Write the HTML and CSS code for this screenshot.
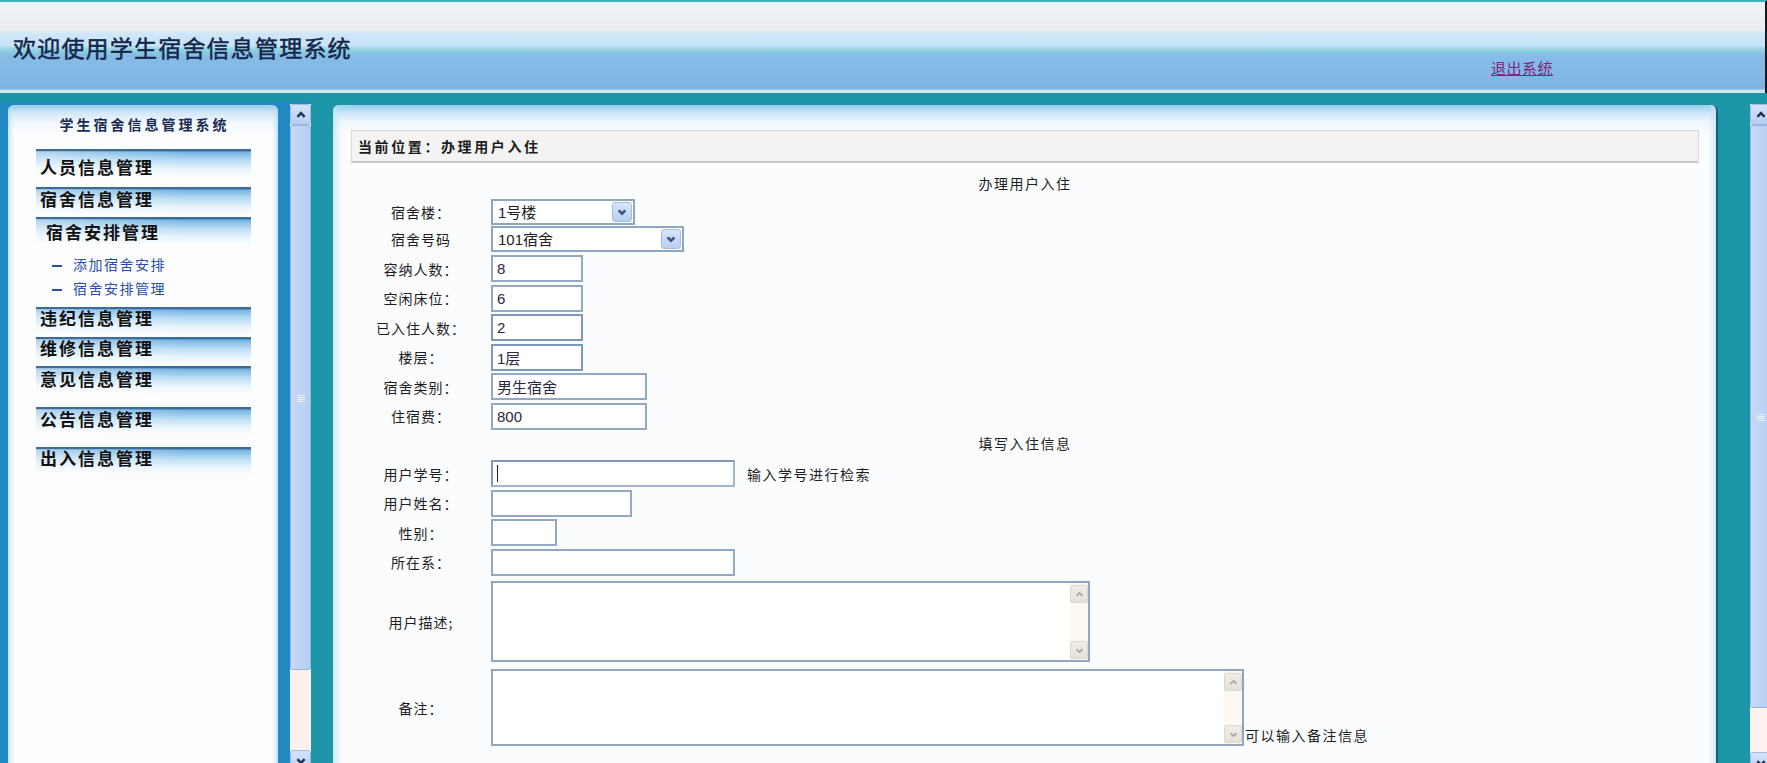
FILE: index.html
```html
<!DOCTYPE html>
<html lang="zh-CN">
<head>
<meta charset="utf-8">
<title>学生宿舍信息管理系统</title>
<link rel="stylesheet" href="styles.css">
</head>
<body>
<div class="page">
  <header class="topbar">
    <h1 class="site-title">欢迎使用学生宿舍信息管理系统</h1>
    <a class="logout" href="#">退出系统</a>
  </header>

  <div class="workspace">
    <div class="side-frame">
      <nav class="side-panel">
        <div class="side-title">学生宿舍信息管理系统</div>
        <div class="menu first">人员信息管理</div>
        <div class="menu">宿舍信息管理</div>
        <div class="menu open">宿舍安排管理</div>
        <ul class="submenu">
          <li><span class="dash"></span>添加宿舍安排</li>
          <li><span class="dash"></span>宿舍安排管理</li>
        </ul>
        <div class="menu tight">违纪信息管理</div>
        <div class="menu tight short">维修信息管理</div>
        <div class="menu tall">意见信息管理</div>
        <div class="menu tall2">公告信息管理</div>
        <div class="menu tight">出入信息管理</div>
      </nav>
      <div class="vscroll left-sb">
        <div class="sb-btn"><svg viewBox="0 0 10 10"><path d="M2 6.6 L5 3.4 L8 6.6" /></svg></div>
        <div class="sb-thumb thumb-left"><svg class="grip" viewBox="0 0 8 8"><path d="M0 1.5H8M0 3.5H8M0 5.5H8M0 7.5H8" /></svg></div>
        <div class="sb-track"></div>
        <div class="sb-btn"><svg viewBox="0 0 10 10"><path d="M2 3.4 L5 6.6 L8 3.4" /></svg></div>
      </div>
    </div>

    <main class="content-panel">
      <div class="crumb">当前位置：办理用户入住</div>
      <form class="checkin">
        <div class="form-title">办理用户入住</div>

        <div class="row r-a">
          <label class="lbl">宿舍楼：</label>
          <div class="sel sel-1">
            <select><option>1号楼</option></select>
            <span class="drop"><svg viewBox="0 0 10 10"><path d="M2.2 3.6 L5 6.4 L7.8 3.6" /></svg></span>
          </div>
        </div>
        <div class="row r-b">
          <label class="lbl">宿舍号码</label>
          <div class="sel sel-2">
            <select><option>101宿舍</option></select>
            <span class="drop"><svg viewBox="0 0 10 10"><path d="M2.2 3.6 L5 6.4 L7.8 3.6" /></svg></span>
          </div>
        </div>
        <div class="row r-c">
          <label class="lbl">容纳人数：</label>
          <input class="inp w-s" type="text" value="8">
        </div>
        <div class="row">
          <label class="lbl">空闲床位：</label>
          <input class="inp w-s" type="text" value="6">
        </div>
        <div class="row">
          <label class="lbl">已入住人数：</label>
          <input class="inp w-s dark" type="text" value="2">
        </div>
        <div class="row">
          <label class="lbl">楼层：</label>
          <input class="inp w-s dark" type="text" value="1层">
        </div>
        <div class="row">
          <label class="lbl">宿舍类别：</label>
          <input class="inp w-m" type="text" value="男生宿舍">
        </div>
        <div class="row">
          <label class="lbl">住宿费：</label>
          <input class="inp w-m" type="text" value="800">
        </div>

        <div class="form-title sub-title">填写入住信息</div>

        <div class="row r-d">
          <label class="lbl">用户学号：</label>
          <div class="inp w-l focus caret-box"><span class="caret"></span></div>
          <span class="hint">输入学号进行检索</span>
        </div>
        <div class="row">
          <label class="lbl">用户姓名：</label>
          <input class="inp w-n" type="text" value="">
        </div>
        <div class="row">
          <label class="lbl">性别：</label>
          <input class="inp w-xs" type="text" value="">
        </div>
        <div class="row">
          <label class="lbl">所在系：</label>
          <input class="inp w-l" type="text" value="">
        </div>
        <div class="row r-e">
          <label class="lbl">用户描述;</label>
          <div class="ta-wrap ta-1">
            <textarea></textarea>
            <div class="ta-scroll">
              <span class="ta-btn"><svg viewBox="0 0 10 10"><path d="M2.2 6.2 L5 3.6 L7.8 6.2" /></svg></span>
              <span class="ta-track"></span>
              <span class="ta-btn"><svg viewBox="0 0 10 10"><path d="M2.2 3.8 L5 6.4 L7.8 3.8" /></svg></span>
            </div>
          </div>
        </div>
        <div class="row r-f">
          <label class="lbl">备注：</label>
          <div class="ta-wrap ta-2">
            <textarea></textarea>
            <div class="ta-scroll">
              <span class="ta-btn"><svg viewBox="0 0 10 10"><path d="M2.2 6.2 L5 3.6 L7.8 6.2" /></svg></span>
              <span class="ta-track"></span>
              <span class="ta-btn"><svg viewBox="0 0 10 10"><path d="M2.2 3.8 L5 6.4 L7.8 3.8" /></svg></span>
            </div>
          </div>
          <span class="hint end">可以输入备注信息</span>
        </div>
      </form>
    </main>

    <div class="vscroll right-sb">
      <div class="sb-btn"><svg viewBox="0 0 10 10"><path d="M2 6.6 L5 3.4 L8 6.6" /></svg></div>
      <div class="sb-thumb thumb-right"><svg class="grip" viewBox="0 0 8 8"><path d="M0 1.5H8M0 3.5H8M0 5.5H8M0 7.5H8" /></svg></div>
      <div class="sb-track"></div>
      <div class="sb-btn"><svg viewBox="0 0 10 10"><path d="M2 3.4 L5 6.6 L8 3.4" /></svg></div>
    </div>
  </div>
</div>
</body>
</html>
```

FILE: styles.css
```css
html, body {
  margin: 0;
  padding: 0;
}

body {
  overflow: hidden;
  background: #1d95a9;
  font-family: "Noto Sans CJK SC", "Liberation Sans", sans-serif;
  color: #222;
}

.page {
  width: 1767px;
  height: 763px;
  overflow: hidden;
  background: #1d95a9;
}

/* ---------- header ---------- */
.topbar {
  box-sizing: border-box;
  height: 93px;
  display: flex;
  align-items: flex-start;
  border-top: 2px solid #3cb2c3;
  border-right: 2px solid #141a20;
  background: linear-gradient(to bottom,
    #f0f3f5 0px,
    #e8edf0 28px,
    #cfe6f7 32px,
    #c6e3f9 44px,
    #a2d6e8 46px,
    #8ecfde 49px,
    #86bde7 53px,
    #7db4e3 87px,
    #cde0eb 88px,
    #d7e7ef 91px);
}

.site-title {
  margin: 0;
  padding: 30px 0 0 13px;
  font-size: 23px;
  line-height: 30px;
  font-weight: normal;
  letter-spacing: 1.2px;
  color: #14264a;
  -webkit-text-stroke: 0.5px #14264a;
}

.logout {
  margin: 56px 212px 0 auto;
  font-size: 15px;
  line-height: 20px;
  letter-spacing: 0.5px;
  color: #85207f;
  text-decoration: underline;
}

/* ---------- workspace ---------- */
.workspace {
  display: flex;
  align-items: flex-start;
  height: 670px;
}

.side-frame {
  flex: none;
  width: 311px;
  height: 700px;
  margin-top: 9px;
  display: flex;
  align-items: flex-start;
  background: #2389c2;
}

.side-panel {
  box-sizing: border-box;
  flex: none;
  width: 270px;
  height: 700px;
  margin: 3px 12px 0 8px;
  padding-top: 9px;
  border-radius: 6px 6px 0 0;
  background: linear-gradient(to bottom, #93c4ec 0, #cfe6f8 7px, #f2f8fd 18px, #fcfdfe 30px);
  box-shadow: inset 4px 0 5px -2px #b3def3, inset -4px 0 5px -2px #b3def3;
}

.side-title {
  text-align: center;
  font-size: 14px;
  line-height: 20px;
  font-weight: bold;
  letter-spacing: 3px;
  color: #1b2b52;
  margin-bottom: 15px;
  padding-left: 3px;
}

.menu {
  box-sizing: border-box;
  width: 215px;
  height: 30px;
  margin-left: 28px;
  padding-left: 4px;
  font-size: 17px;
  line-height: 24px;
  font-weight: bold;
  letter-spacing: 2px;
  color: #111;
  background:
    linear-gradient(to right, rgba(255,255,255,0.45) 0%, rgba(255,255,255,0) 70%) no-repeat 0 2px / 100% 28px,
    linear-gradient(to bottom, #3d6c9a 0, #3d6c9a 2px, #74b4e4 3px, #b6daf3 11px, #e8f4fc 20px, rgba(255,255,255,0) 28px) no-repeat 0 0 / 100% 28px;
}

.menu.first { height: 38px; padding-top: 6px; }
.menu.open { height: 35px; padding-top: 3px; padding-left: 10px; }
.menu.tight { line-height: 22px; }
.menu.short { height: 29px; }
.menu.tall { height: 41px; line-height: 26px; }
.menu.tall2 { height: 40px; }

.submenu {
  list-style: none;
  margin: 0 0 7px 0;
  padding: 0 0 0 44px;
}

.submenu li {
  height: 24px;
  line-height: 24px;
  font-size: 14px;
  letter-spacing: 1.5px;
  color: #2b4ea6;
}

.dash {
  display: inline-block;
  width: 10px;
  height: 2px;
  margin-right: 11px;
  vertical-align: middle;
  background: #2b4ea6;
}

/* ---------- scrollbars ---------- */
.vscroll {
  flex: none;
  width: 21px;
  display: flex;
  flex-direction: column;
  background: #fbf0ea;
}

.left-sb { height: 680px; margin-top: 2px; }
.right-sb { height: 680px; margin: 11px 0 0 32px; }

.sb-btn {
  box-sizing: border-box;
  flex: none;
  height: 21px;
  display: flex;
  align-items: center;
  justify-content: center;
  border: 1px solid #9fb9e2;
  border-radius: 3px;
  background: linear-gradient(to bottom, #d6e4fb, #b6cdf3);
}

.sb-btn svg {
  width: 12px;
  height: 12px;
}

.sb-btn path {
  fill: none;
  stroke: #22335a;
  stroke-width: 2;
}

.sb-thumb {
  box-sizing: border-box;
  flex: none;
  display: flex;
  align-items: center;
  justify-content: center;
  border: 1px solid #98b3df;
  border-radius: 2px;
  background: linear-gradient(to right, #c5daf6, #b6cef1);
}

.thumb-left { height: 545px; }
.thumb-right { height: 583px; }

.grip {
  width: 8px;
  height: 8px;
}

.grip path {
  stroke: #eef4fd;
  stroke-width: 1;
}

.sb-track {
  flex: none;
  height: 80px;
  background: #fcf1ec;
}

.right-sb .sb-track { height: 44px; }

/* ---------- content panel ---------- */
.content-panel {
  box-sizing: border-box;
  flex: none;
  width: 1385px;
  height: 700px;
  margin: 12px 0 0 22px;
  padding: 25px 17px 0 18px;
  border-right: 2px solid #1a5d7e;
  border-radius: 6px 6px 0 0;
  background: linear-gradient(to bottom, #8cc5ec 0, #c8e4f8 7px, #eef7fd 17px, #fbfcfd 28px);
  box-shadow: inset 6px 0 7px -3px #bfe6f4, inset -6px 0 7px -3px #c8e6f6;
}

.crumb {
  box-sizing: border-box;
  height: 33px;
  padding-left: 6px;
  border: 1px solid #d9d9d9;
  border-bottom: 2px solid #c8c8c8;
  background: #f3f3f3;
  font-size: 14px;
  line-height: 30px;
  font-weight: bold;
  letter-spacing: 2.6px;
  color: #1d1d1d;
}

.checkin {
  margin: 0;
  padding-top: 7px;
  font-size: 14px;
  color: #1e1e1e;
}

.form-title {
  height: 26px;
  line-height: 26px;
  text-align: center;
  letter-spacing: 1.5px;
}

.form-title.sub-title {
  height: 24px;
  line-height: 22px;
  margin-top: 2.5px;
}

.row {
  display: flex;
  align-items: center;
  margin-top: 2.5px;
}

.row.r-a { margin-top: 3px; }
.row.r-b { margin-top: 1px; }
.row.r-c { margin-top: 3px; }
.row.r-d { margin-top: 4px; }
.row.r-e { margin-top: 5.5px; }
.row.r-f { margin-top: 7px; }

.lbl {
  flex: none;
  width: 140px;
  text-align: center;
  letter-spacing: 1px;
}

.inp {
  box-sizing: border-box;
  height: 27px;
  padding: 0 4px;
  border: 2px solid #93a9c2;
  background: #fff;
  font-family: "Liberation Sans", "Noto Sans CJK SC", sans-serif;
  font-size: 15px;
  color: #2a2742;
  outline: none;
}

.inp.dark { border-color: #7e99b8; }
.inp.focus { border-color: #8199b6 #a2b6cc #a2b6cc #8199b6; }

.caret-box {
  display: flex;
  align-items: center;
}

.caret {
  display: block;
  width: 1px;
  height: 17px;
  background: #222;
}

.w-xs { width: 66px; }
.w-s { width: 92px; }
.w-n { width: 141px; }
.w-m { width: 156px; }
.w-l { width: 244px; }

.hint {
  margin-left: 12px;
  letter-spacing: 1.5px;
}

.hint.end {
  margin-left: 1px;
  align-self: flex-end;
  line-height: 22px;
}

/* custom select */
.sel {
  position: relative;
  box-sizing: border-box;
  height: 26px;
  border: 2px solid #8fa6c1;
  background: #fff;
}

.sel-1 { width: 144px; }
.sel-2 { width: 193px; }

.sel select {
  appearance: none;
  -webkit-appearance: none;
  box-sizing: border-box;
  width: 100%;
  height: 100%;
  border: 0;
  padding: 0 0 0 5px;
  background: transparent;
  font-family: "Liberation Sans", "Noto Sans CJK SC", sans-serif;
  font-size: 15px;
  color: #222;
  outline: none;
}

.drop {
  position: absolute;
  top: 1px;
  right: 1px;
  box-sizing: border-box;
  width: 20px;
  height: 20px;
  display: flex;
  align-items: center;
  justify-content: center;
  border: 1px solid #a6bde2;
  border-radius: 3px;
  background: linear-gradient(to bottom, #d8e5fb, #b9cff3);
  pointer-events: none;
}

.drop svg { width: 12px; height: 12px; }

.drop path {
  fill: none;
  stroke: #3d5283;
  stroke-width: 2.2;
}

/* textareas */
.ta-wrap {
  box-sizing: border-box;
  display: flex;
  border: 2px solid #91a7c0;
  background: #fff;
}

.ta-1 { width: 599px; height: 81px; }
.ta-2 { width: 753px; height: 77px; }

.ta-wrap textarea {
  flex: 1;
  border: 0;
  margin: 0;
  padding: 2px;
  resize: none;
  outline: none;
  background: #fff;
  font-family: "Liberation Sans", "Noto Sans CJK SC", sans-serif;
  font-size: 14px;
}

.ta-scroll {
  flex: none;
  width: 18px;
  display: flex;
  flex-direction: column;
  background: #fdf8f1;
}

.ta-btn {
  box-sizing: border-box;
  flex: none;
  height: 18px;
  margin-top: 2px;
  display: flex;
  align-items: center;
  justify-content: center;
  border: 1px solid #ddd7cf;
  border-radius: 2px;
  background: linear-gradient(to bottom, #f1eee9, #e4e0da);
}

.ta-btn:last-child { margin: 0 0 1px 0; }

.ta-btn svg { width: 11px; height: 11px; }

.ta-btn path {
  fill: none;
  stroke: #aaa39b;
  stroke-width: 1.5;
}

.ta-track { flex: 1; }
```
